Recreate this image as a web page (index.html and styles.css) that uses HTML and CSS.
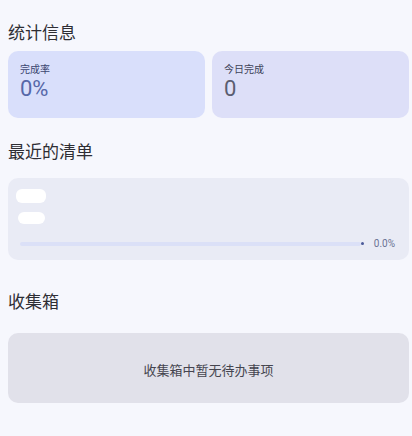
FILE: index.html
```html
<!DOCTYPE html>
<html lang="zh">
<head>
<meta charset="utf-8">
<link rel="stylesheet" href="styles.css">
</head>
<body>
<main class="page">
  <h2 class="section-title first">统计信息</h2>
  <div class="stats">
    <div class="stat stat-rate">
      <div class="stat-label">完成率</div>
      <div class="stat-value">0%</div>
    </div>
    <div class="stat stat-today">
      <div class="stat-label">今日完成</div>
      <div class="stat-value">0</div>
    </div>
  </div>

  <h2 class="section-title">最近的清单</h2>
  <div class="list-card">
    <div class="blob blob-a"></div>
    <div class="blob blob-b"></div>
    <div class="progress-row">
      <div class="track"></div>
      <span class="dot"></span>
      <span class="pct">0.0%</span>
    </div>
  </div>

  <h2 class="section-title inbox-title">收集箱</h2>
  <div class="inbox-card">收集箱中暂无待办事项</div>
</main>
</body>
</html>
```

FILE: styles.css
```css
html, body {
  margin: 0;
  padding: 0;
  background: #f6f7fd;
}
body {
  font-family: Roboto, "Noto Sans CJK SC", sans-serif;
  color: #1c1c22;
}
.page {
  padding: 0 3px 0 8px;
  display: flex;
  flex-direction: column;
}
.section-title {
  margin: 0;
  font-size: 17px;
  font-weight: 400;
  line-height: 24px;
  color: #2e2e34;
}
.section-title.first {
  margin-top: 21px;
  margin-bottom: 6px;
}
.stats {
  display: grid;
  grid-template-columns: 1fr 1fr;
  gap: 7px;
  margin-bottom: 22px;
}
.stat {
  height: 67px;
  border-radius: 10px;
  padding: 12px 12px 0 12px;
  box-sizing: border-box;
}
.stat-rate { background: #d9dffb; }
.stat-today { background: #dddff8; }
.stat-label {
  font-size: 10px;
  line-height: 14px;
  color: #3c4670;
}
.stat-today .stat-label { color: #404358; }
.stat-value {
  font-size: 22px;
  line-height: 24px;
  color: #5667a8;
}
.stat-today .stat-value { color: #5a5d70; }

.list-card {
  margin-top: 14px;
  height: 82px;
  box-sizing: border-box;
  border-radius: 10px;
  background: #e9ebf5;
  padding: 11px 14px 0 7px;
  display: flex;
  flex-direction: column;
}
.blob {
  background: #ffffff;
  border-radius: 6px;
}
.blob-a {
  width: 30px;
  height: 14px;
  margin-left: 1px;
}
.blob-b {
  width: 27px;
  height: 12px;
  margin-top: 9px;
  margin-left: 3px;
}
.progress-row {
  display: flex;
  align-items: center;
  margin-top: 14px;
  padding-left: 5px;
}
.track {
  flex: 1;
  height: 4px;
  border-radius: 2px;
  background: #dbe0f7;
}
.dot {
  width: 3px;
  height: 3px;
  border-radius: 50%;
  background: #4b5a99;
  margin-left: 0;
}
.pct {
  margin-left: 10px;
  font-size: 10px;
  color: #6a7294;
}
.inbox-title {
  margin-top: 30px;
}
.inbox-card {
  margin-top: 19px;
  height: 70px;
  border-radius: 10px;
  background: #e1e1ea;
  display: flex;
  align-items: center;
  justify-content: center;
  font-size: 13px;
  color: #45454f;
  padding-top: 2px;
  box-sizing: border-box;
}
```
